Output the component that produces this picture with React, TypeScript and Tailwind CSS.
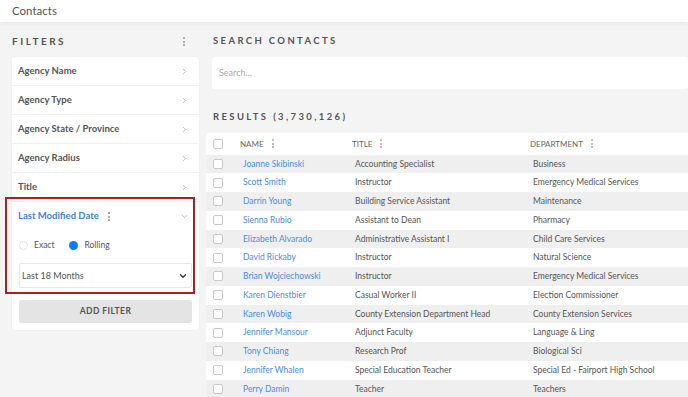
import { ChevronRight, ChevronDown } from 'lucide-react'

const FILTERS = ['Agency Name', 'Agency Type', 'Agency State / Province', 'Agency Radius', 'Title']

const CONTACTS = [
  ['Joanne Skibinski', 'Accounting Specialist', 'Business'],
  ['Scott Smith', 'Instructor', 'Emergency Medical Services'],
  ['Darrin Young', 'Building Service Assistant', 'Maintenance'],
  ['Sienna Rubio', 'Assistant to Dean', 'Pharmacy'],
  ['Elizabeth Alvarado', 'Administrative Assistant I', 'Child Care Services'],
  ['David Rickaby', 'Instructor', 'Natural Science'],
  ['Brian Wojciechowski', 'Instructor', 'Emergency Medical Services'],
  ['Karen Dienstbier', 'Casual Worker II', 'Election Commissioner'],
  ['Karen Wobig', 'County Extension Department Head', 'County Extension Services'],
  ['Jennifer Mansour', 'Adjunct Faculty', 'Language & Ling'],
  ['Tony Chiang', 'Research Prof', 'Biological Sci'],
  ['Jennifer Whalen', 'Special Education Teacher', 'Special Ed - Fairport High School'],
  ['Perry Damin', 'Teacher', 'Teachers'],
]

function Kebab({ className = '' }: { className?: string }) {
  return (
    <span className={`inline-flex flex-col items-center gap-[1.5px] ${className}`}>
      <span className="h-[2px] w-[2px] rounded-full bg-current" />
      <span className="h-[2px] w-[2px] rounded-full bg-current" />
      <span className="h-[2px] w-[2px] rounded-full bg-current" />
    </span>
  )
}

function Box() {
  return <span className="block h-[10px] w-[10px] rounded-[2px] border border-[#c9c9c9] bg-white" />
}

export default function App() {
  return (
    <div className="relative h-[397px] w-[688px] overflow-hidden bg-[#f4f4f4] font-['Lato',sans-serif] text-[#444]">
      <header className="relative z-10 flex h-[22px] items-center bg-white pl-3 text-[11.5px] text-[#555] shadow-[0_2px_4px_rgba(0,0,0,0.06)]">
        Contacts
      </header>

      <div className="flex">
        <aside className="w-[200px] shrink-0 pl-3 pr-[1px]">
          <div className="flex h-[35px] items-center justify-between pr-[14px] pt-[4px]">
            <span className="text-[10px] font-bold tracking-[0.25em] text-[#555]">FILTERS</span>
            <Kebab className="text-[#999]" />
          </div>
          <div className="rounded-[3px] bg-white pb-[7px] shadow-[0_0_2px_rgba(0,0,0,0.05)]">
            {FILTERS.map((label) => (
              <div key={label} className="flex h-[29px] items-center justify-between border-b border-[#f0f0f0] pl-[6px] pr-[10px]">
                <span className="text-[9.5px] font-bold text-[#555]">{label}</span>
                <ChevronRight size={9} strokeWidth={2} className="text-[#aaa]" />
              </div>
            ))}
            <div className="flex h-[29px] items-center justify-between pl-[6px] pr-[10px]">
              <span className="flex items-center gap-[9px] text-[9.5px] font-bold text-[#3b82e6]">
                Last Modified Date
                <Kebab className="text-[#888]" />
              </span>
              <ChevronDown size={9} strokeWidth={2} className="text-[#aaa]" />
            </div>
            <div className="flex h-[29px] items-center gap-[6px] pl-[7px] text-[8.5px] text-[#555]">
              <span className="h-[9px] w-[9px] rounded-full border border-[#e2e2e2]" />
              <span className="mr-[9px]">Exact</span>
              <span className="h-[9px] w-[9px] rounded-full bg-[#0a7cff]" />
              <span>Rolling</span>
            </div>
            <div className="px-[7px] pt-[3px]">
              <div className="flex h-[25px] items-center justify-between rounded-[2px] border border-[#e8e8e8] pl-[2px] pr-[3px] text-[9px] text-[#555]">
                Last 18 Months
                <ChevronDown size={10} strokeWidth={3} className="text-[#333]" />
              </div>
            </div>
            <div className="px-[7px] pt-[12px]">
              <div className="flex h-[23px] items-center justify-center rounded-[2px] bg-[#e4e4e4] text-[8.5px] font-bold tracking-[0.05em] text-[#555]">
                ADD FILTER
              </div>
            </div>
          </div>
        </aside>

        <main className="flex-1 pl-[6px]">
          <div className="flex h-[35px] items-center pl-[7px] pt-[4px]">
            <span className="text-[9.5px] font-bold tracking-[0.25em] text-[#555]">SEARCH CONTACTS</span>
          </div>
          <div className="ml-[6px] flex h-[32px] items-center rounded-[3px] bg-white pl-[7px] text-[9px] text-[#aaa]">
            Search...
          </div>
          <div className="flex h-[44px] items-center pl-[7px] pt-[12px]">
            <span className="text-[9.5px] font-bold tracking-[0.25em] text-[#555]">RESULTS (3,730,126)</span>
          </div>
          <div className="bg-white">
            <div className="flex h-[21.5px] items-center pl-[7px] text-[8px] text-[#666]">
              <Box />
              <span className="ml-[17px] flex w-[112px] items-center gap-[8px]">NAME<Kebab className="text-[#aaa]" /></span>
              <span className="flex w-[178px] items-center gap-[8px]">TITLE<Kebab className="text-[#aaa]" /></span>
              <span className="flex items-center gap-[8px]">DEPARTMENT<Kebab className="text-[#aaa]" /></span>
            </div>
            {CONTACTS.map(([name, title, dept], i) => (
              <div
                key={name}
                className={`flex h-[18.75px] items-center pl-[7px] text-[8.5px] ${i % 2 === 0 ? 'bg-[#efefef]' : 'bg-white'}`}
              >
                <Box />
                <span className="ml-[20px] w-[112px] text-[#4a8be8]">{name}</span>
                <span className="w-[178px] text-[#555]">{title}</span>
                <span className="text-[#555]">{dept}</span>
              </div>
            ))}
          </div>
        </main>
      </div>

      <div className="pointer-events-none absolute left-[5px] top-[197px] h-[97px] w-[190px] border-2 border-[#b71c1c]" />
    </div>
  )
}
